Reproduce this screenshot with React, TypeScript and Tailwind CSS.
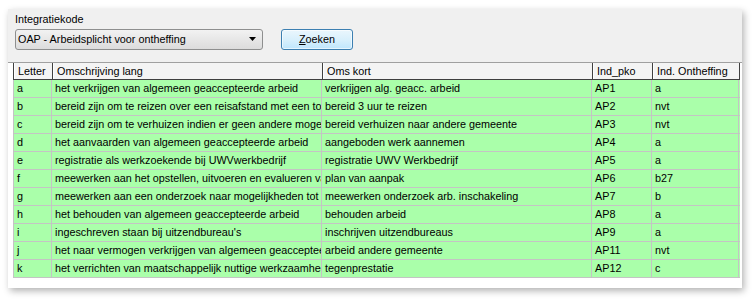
type Row = { letter: string; lang: string; kort: string; pko: string; onth: string };

const rows: Row[] = [
	{ letter: "a", lang: "het verkrijgen van algemeen geaccepteerde arbeid", kort: "verkrijgen alg. geacc. arbeid", pko: "AP1", onth: "a" },
	{ letter: "b", lang: "bereid zijn om te reizen over een reisafstand met een totale reisduur van 3 uur", kort: "bereid 3 uur te reizen", pko: "AP2", onth: "nvt" },
	{ letter: "c", lang: "bereid zijn om te verhuizen indien er geen andere mogelijkheden zijn", kort: "bereid verhuizen naar andere gemeente", pko: "AP3", onth: "nvt" },
	{ letter: "d", lang: "het aanvaarden van algemeen geaccepteerde arbeid", kort: "aangeboden werk aannemen", pko: "AP4", onth: "a" },
	{ letter: "e", lang: "registratie als werkzoekende bij UWVwerkbedrijf", kort: "registratie UWV Werkbedrijf", pko: "AP5", onth: "a" },
	{ letter: "f", lang: "meewerken aan het opstellen, uitvoeren en evalueren van een plan van aanpak", kort: "plan van aanpak", pko: "AP6", onth: "b27" },
	{ letter: "g", lang: "meewerken aan een onderzoek naar mogelijkheden tot arbeidsinschakeling", kort: "meewerken onderzoek arb. inschakeling", pko: "AP7", onth: "b" },
	{ letter: "h", lang: "het behouden van algemeen geaccepteerde arbeid", kort: "behouden arbeid", pko: "AP8", onth: "a" },
	{ letter: "i", lang: "ingeschreven staan bij uitzendbureau's", kort: "inschrijven uitzendbureaus", pko: "AP9", onth: "a" },
	{ letter: "j", lang: "het naar vermogen verkrijgen van algemeen geaccepteerde arbeid", kort: "arbeid andere gemeente", pko: "AP11", onth: "nvt" },
	{ letter: "k", lang: "het verrichten van maatschappelijk nuttige werkzaamheden", kort: "tegenprestatie", pko: "AP12", onth: "c" },
];

const cols = "grid-cols-[39px_270px_270px_60px_87px]";

function HeaderCell({ children }: { children: React.ReactNode }) {
	return (
		<div className="h-full border-r border-r-[#404040] border-l border-l-white pl-[3px] flex items-center overflow-hidden whitespace-nowrap">
			{children}
		</div>
	);
}

function Cell({ children, first }: { children: React.ReactNode; first?: boolean }) {
	return (
		<div
			className={`h-full border-r border-[#c4c4c4] ${first ? "border-l" : ""} pl-[3px] flex items-center overflow-hidden whitespace-nowrap`}
		>
			{children}
		</div>
	);
}

export default function App() {
	return (
		<div
			className="w-[754px] h-[299px] bg-white pt-[9px] pl-[8px] text-[10.8px] text-black"
			style={{ fontFamily: '"Liberation Sans", Arial, sans-serif' }}
		>
			<div className="w-[734px] h-[279px] flex flex-col bg-white shadow-[2px_3px_7px_rgba(0,0,0,0.3)]">
				{/* Filter bar */}
				<div className="h-[54px] bg-[#f0f0f0] border-b border-[#a0a0a0] pl-[7px] pt-[3px]">
					<div className="leading-[14px]">Integratiekode</div>
					<div className="flex items-center mt-[3px] gap-[18px]">
						<div className="w-[248px] h-[21px] rounded-[3px] border border-[#8e8f8f] bg-gradient-to-b from-[#f2f2f2] to-[#dcdcdc] flex items-center pl-[2px] pr-[4px] justify-between">
							<span>OAP - Arbeidsplicht voor ontheffing</span>
							<svg width="8" height="5" viewBox="0 0 8 5" className="mr-[1px]">
								<path d="M0 0 H7 L3.5 4 Z" fill="#000" />
							</svg>
						</div>
						<div className="w-[72px] h-[21px] rounded-[3px] border border-[#3c7fb1] bg-gradient-to-b from-[#eaf6fd] via-[#d9f0fc] to-[#bee6fd] shadow-[inset_0_0_0_1px_rgba(255,255,255,0.6)] flex items-center justify-center">
							<span>
								<span className="underline">Z</span>oeken
							</span>
						</div>
					</div>
				</div>

				{/* Grid */}
				<div className="flex-1 bg-white pl-[5px]">
					<div className={`grid ${cols} h-[17px] border-l border-[#404040] border-b border-b-[#404040] bg-[#f4f4f4] w-[727px]`}>
						<HeaderCell>Letter</HeaderCell>
						<HeaderCell>Omschrijving lang</HeaderCell>
						<HeaderCell>Oms kort</HeaderCell>
						<HeaderCell>Ind_pko</HeaderCell>
						<HeaderCell>Ind. Ontheffing</HeaderCell>
					</div>
					{rows.map((r) => (
						<div key={r.letter} className={`grid ${cols} h-[18px] bg-[#aaffaa] border-b border-[#c4c4c4] w-[727px]`}>
							<Cell first>{r.letter}</Cell>
							<Cell>{r.lang}</Cell>
							<Cell>{r.kort}</Cell>
							<Cell>{r.pko}</Cell>
							<Cell>{r.onth}</Cell>
						</div>
					))}
				</div>
			</div>
		</div>
	);
}
